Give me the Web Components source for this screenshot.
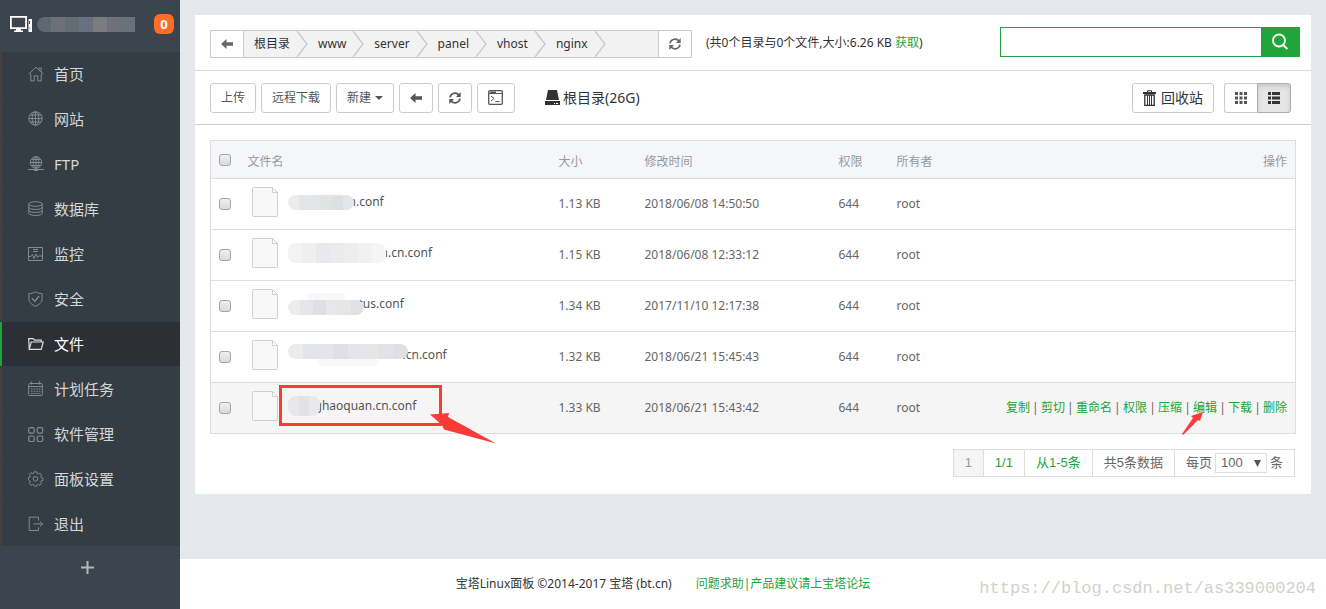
<!DOCTYPE html>
<html lang="zh-CN">
<head>
<meta charset="utf-8">
<title>宝塔Linux面板</title>
<style>
html, body { margin: 0; }
body {
  font: 12px/18px "Noto Sans", "Noto Sans CJK SC", sans-serif;
  color: #333; background: #fff;
  --green: #20a53a; --line: #ddd;
}
</style>
</head>
<body>
<panel-app>
  <side-nav slot="side" count="0">
    <nav-item icon="home">首页</nav-item>
    <nav-item icon="globe">网站</nav-item>
    <nav-item icon="ftp">FTP</nav-item>
    <nav-item icon="db">数据库</nav-item>
    <nav-item icon="monitor">监控</nav-item>
    <nav-item icon="shield">安全</nav-item>
    <nav-item icon="folder" active>文件</nav-item>
    <nav-item icon="calendar">计划任务</nav-item>
    <nav-item icon="apps">软件管理</nav-item>
    <nav-item icon="gear">面板设置</nav-item>
    <nav-item icon="exit">退出</nav-item>
  </side-nav>
  <path-bar path="根目录/www/server/panel/vhost/nginx"></path-bar>
  <tool-bar></tool-bar>
  <file-table></file-table>
  <page-bar></page-bar>
  <page-footer slot="footer"></page-footer>
</panel-app>

<script>
const ICONS = {
  home: [16, 16, '<g fill="none" stroke="currentColor"><path d="M.7 8.3 8 1.2l7.3 7.1M2.8 8v6.9h3.4V9.8h3.6v5.1h3.4V8M11 3.6V2h2.2v3.8"/></g>'],
  globe: [16, 16, '<g fill="none" stroke="currentColor"><circle cx="7.5" cy="7.5" r="6.7"/><ellipse cx="7.5" cy="7.5" rx="3.4" ry="6.7"/><path d="M7.5.8v13.4M.8 7.5h13.4M2 4h11M2 11h11"/></g>'],
  ftp: [16, 16, '<g fill="none" stroke="currentColor"><circle cx="8" cy="6.5" r="5.7"/><ellipse cx="8" cy="6.5" rx="2.8" ry="5.7"/><path d="M8 .8v12M2.3 6.5h11.4M3.4 3.5h9.2M3.4 9.5h9.2M0 13.5h16" /><path d="M6 14h4" stroke-width="2"/></g>'],
  db: [16, 16, '<g fill="none" stroke="currentColor"><ellipse cx="7.5" cy="3" rx="6.7" ry="2.3"/><path d="M.8 3v9.2c0 3 13.4 3 13.4 0V3M.8 6.2c0 3 13.4 3 13.4 0M.8 9.2c0 3 13.4 3 13.4 0"/></g>'],
  monitor: [16, 16, '<g fill="none" stroke="currentColor"><path d="M.5 1.5h14v13H.5zM5 3.5h5M5 5.5h5M1 10.5h2l1.5-2 1.5 4L8 8l1.5 3.5 1-1.5H14"/></g>'],
  shield: [16, 16, '<g fill="none" stroke="currentColor"><path d="M7.5.8C5.5 2 3.5 2.5.9 2.6v5.2c0 3.6 3 6 6.6 7.5 3.6-1.5 6.6-3.9 6.6-7.5V2.6C11.5 2.5 9.5 2 7.5.8z"/><path d="m4 7.3 2.8 2.9L11.2 5" stroke-width="1.3"/></g>'],
  folder: [16, 16, '<g fill="none" stroke="currentColor" stroke-width="1.2"><path d="M1.2 13 .7 2.6h4.5l1.3 1.5h6.8v1.8M1.2 13.3 3.2 6h12l-2 7.3z"/></g>'],
  calendar: [16, 16, '<g fill="none" stroke="currentColor"><rect x=".7" y="2.5" width="13.6" height="12" rx="1"/><path d="M.7 5.5h13.6M3.5.5v3M11.5.5v3"/><path d="M3 8h9.5M3 10.3h9.5M3 12.5h9.5" stroke-dasharray="1.6 1"/></g>'],
  apps: [16, 16, '<g fill="none" stroke="currentColor" stroke-width="1.2"><rect x=".7" y="1.7" width="5.5" height="5.5" rx="1.5"/><rect x="9.2" y="1.7" width="5.5" height="5.5" rx="1.5"/><rect x=".7" y="10" width="5.5" height="5.5" rx="1.5"/><rect x="9.2" y="10" width="5.5" height="5.5" rx="1.5"/></g>'],
  gear: [16, 16, '<g fill="none" stroke="currentColor"><path d="m6.3.8 2.4 0 .4 1.700 1.300.500 1.500-.9 1.700 1.700-.9 1.500.5 1.300 1.700.4v2.400l-1.700.4-.5 1.300.9 1.500-1.700 1.700-1.500-.9-1.300.500-.4 1.300H6.300l-.4-1.300-1.300-.5-1.500.9-1.700-1.700.9-1.500-.5-1.300L.4 9V6.600l1.400-.4.500-1.300-.9-1.500 1.700-1.700 1.500.9 1.300-.5z"/><circle cx="7.500" cy="7.800" r="2.300"/></g>'],
  exit: [16, 16, '<g fill="none" stroke="currentColor"><path d="M10.5 4.5V1.2H1.2v13.3h9.3v-3.3M5.5 7.9h9M12 5.5l2.500 2.400L12 10.300"/></g>'],
  pc: [23, 17, '<g fill="currentColor"><path d="M0 0h17v13H0zm1.8 1.8v9.4h13.4V1.8z" fill-rule="evenodd"/><path d="M6 13h5v1.5h2V16H4v-1.5h2z"/><path d="M18.5 3H22v13h-3.5z"/></g><path d="M19.5 5v3M20 11.5v1" stroke="#3c444d"/>'],
  back: [12, 10, '<path fill="currentColor" d="M0 5 5.5 0v3.2H12v3.6H5.5V10z"/>'],
  refresh: [12, 14, '<g transform="translate(-1 0)"><g fill="none" stroke="currentColor" stroke-width="1.7"><path d="M2 6.3A5 5 0 0 1 11 4.2M12 7.7A5 5 0 0 1 3 9.8"/></g><path fill="currentColor" d="M12.7 1v5H8zM1.3 13V8H6z"/></g>'],
  terminal: [16, 15, '<g fill="none" stroke="currentColor"><rect x=".7" y=".7" width="13.6" height="13.6" rx="1" stroke-width="1.3"/><path d="M1 3.5h13M3 6l3 2.5L3 11M7.5 11.5h4"/></g><path d="M2 1.500h6V3H2z" fill="currentColor"/>'],
  disk: [15, 15, '<g fill="currentColor"><path d="M3 0h9l2 10H1z"/><path d="M0 11h15v4H0z"/></g><path d="M9 13.5h1m1 0h2" stroke="#fff"/>'],
  trash: [14, 16, '<g fill="none" stroke="currentColor"><path d="M0 3h13" stroke-width="2"/><path d="M4.5 2V.7h4V2"/><path d="M1.8 5h9.4v10.3H1.8z" stroke-width="1.3"/><path d="M4.5 5v10M6.5 5v10M8.5 5v10"/></g>'],
  grid: [12, 12, '<path fill="currentColor" d="M0 0h3v3H0zM4.5 0h3v3h-3zM9 0h3v3H9zM0 4.5h3v3H0zM4.5 4.5h3v3h-3zM9 4.5h3v3H9zM0 9h3v3H0zM4.5 9h3v3h-3zM9 9h3v3H9z"/>'],
  list: [12, 12, '<path fill="currentColor" d="M0 0h3v3H0zM4 0h8v3H4zM0 4.5h3v3H0zM4 4.5h8v3H4zM0 9h3v3H0zM4 9h8v3H4z"/>'],
  search: [18, 18, '<g fill="none" stroke="currentColor" stroke-width="1.8"><circle cx="8" cy="7.5" r="6"/><path d="m12 12 4.500 4"/></g>'],
  sep: [12, 26, '<path d="M1 0 11 13 1 26" fill="none" stroke="#c8c8d2" stroke-width="1.3"/>'],
  file: [26, 30, '<path d="M.5 1.5a1 1 0 0 1 1-1H20.5l5 5V28.5a1 1 0 0 1-1 1h-23a1 1 0 0 1-1-1z" fill="#f8f8f8" stroke="#d0d0d0"/><path d="M20.5.5v5h5z" fill="#fff" stroke="#d0d0d0"/>']
};

const define = (name, render) => customElements.define(name, class extends HTMLElement {
  constructor() { super(); this.attachShadow({ mode: 'open' }); }
  connectedCallback() {
    this.shadowRoot.innerHTML = '<style>:host,*{box-sizing:border-box}a{color:inherit;text-decoration:none}</style>' + render(this);
  }
});

define('ui-icon', el => {
  const [w, h, body] = ICONS[el.getAttribute('name')];
  return `<style>:host{display:block;flex:none}svg{display:block}</style>
  <svg width="${w}" height="${h}" viewBox="0 0 ${w} ${h}" aria-hidden="true">${body}</svg>`;
});

/* Pixelated strip that hides the private part of a name; "faint" adds a paler smear above or below it */
define('mask-strip', el => {
  const w = +el.getAttribute('width'), h = +el.getAttribute('height') || 15;
  const faint = el.getAttribute('faint');
  return `<style>:host{display:flex;flex-direction:${faint === 'above' ? 'column-reverse' : 'column'};flex:none;position:relative;z-index:1;width:${w}px}
  .tones{display:flex;height:${h}px;border-radius:${el.getAttribute('shape') || '8px'};overflow:hidden}i{flex:1}
  .smear{height:7px;margin:0 25%;border-radius:3px;background:#f8f8f9}</style>
  <div class="tones">${el.getAttribute('tones').split(' ').map(t => `<i style="background:#${t}"></i>`).join('')}</div>
  ${faint === 'above' || faint === 'below' ? '<div class="smear"></div>' : ''}`;
});

define('panel-app', () => `<style>
  :host{display:flex;min-height:100vh}
  .page{flex:1;min-width:0;display:flex;flex-direction:column;background:#e5e9ee}
  main{margin:15px 15px 24px;background:#fff}
  slot[name=footer]{display:block;margin-top:auto}
  </style><slot name="side"></slot>
  <div class="page"><main><slot></slot></main><slot name="footer"></slot></div>`);

define('side-nav', el => `<style>
  :host{display:block;flex:none;width:180px;background:#3c444d;color:#fff}
  header{display:flex;align-items:center;gap:4px;height:52px;padding:0 6px 4px 10px}
  header b{margin-left:auto;width:20px;height:20px;border-radius:6px;background:#ff6d27;font-size:13px;line-height:20px;text-align:center}
  nav{display:flex;flex-direction:column;gap:1px;background:#353d44}
  button{display:flex;align-items:center;justify-content:center;width:175px;height:42px;padding:0;border:0;background:none}
  </style>
  <header><ui-icon name="pc"></ui-icon>
    <mask-strip width="98" shape="8px 0 0 8px" tones="5d6871 6f6f78 636b73 68717f 7b7b80 6f7079 68727b"></mask-strip>
    <b>${el.getAttribute('count')}</b></header>
  <nav><slot></slot></nav>
  <button aria-label="添加"><svg width="13" height="13"><path d="M6.5 0v13M0 6.5h13" stroke="#b4b7ba" stroke-width="2"/></svg></button>`);

define('nav-item', el => {
  const on = el.hasAttribute('active');
  return `<style>
  :host{display:block}
  a{display:flex;align-items:center;gap:10px;height:44px;padding-left:26px;border-left:2px solid ${on ? 'var(--green)' : '#463f3e'};
    font-size:15px;line-height:20px;color:${on ? '#fff' : '#d4d6d8'};background:${on ? '#2c3036' : 'transparent'}}
  ui-icon{color:${on ? '#dcdcdc' : '#858a8e'}}
  </style><a href="#"><ui-icon name="${el.getAttribute('icon')}"></ui-icon><slot></slot></a>`;
});

define('path-bar', el => `<style>
  :host{display:flex;align-items:center;height:56px;padding:0 11px 0 15px;border-bottom:1px solid var(--line)}
  .crumbs{display:flex;width:482px;height:28px;margin-top:2px;border:1px solid #ccc;background:#f2f2f2}
  button{display:flex;align-items:center;justify-content:center;padding:0;border:0;color:#666;background:#fff}
  .crumbs button{width:33px}
  .crumbs button:first-child{border-right:1px solid #ccc}
  .crumbs button:last-child{border-left:1px solid #ccc;margin-left:auto}
  ol{display:flex;margin:0;padding:0;list-style:none}
  li{display:flex;align-items:center;padding-left:10px;gap:6px}
  p{margin:0 auto 0 14px;white-space:nowrap}
  p a{color:var(--green)}
  form{display:flex;width:300px;height:30px;margin-bottom:2px;border:1px solid var(--green)}
  input{flex:1;min-width:0;border:0;padding:0 8px;font:inherit;outline:0}
  form button{width:38px;background:var(--green);color:#fff}
  </style>
  <nav class="crumbs"><button aria-label="返回"><ui-icon name="back"></ui-icon></button>
  <ol>${el.getAttribute('path').split('/').map(p => `<li><a href="#">${p}</a><ui-icon name="sep"></ui-icon></li>`).join('')}</ol>
  <button aria-label="刷新"><ui-icon name="refresh"></ui-icon></button></nav>
  <p>(共0个目录与0个文件,大小:6.26 KB <a href="#">获取</a>)</p>
  <form><input type="text" aria-label="搜索文件"><button type="button" aria-label="搜索"><ui-icon name="search"></ui-icon></button></form>`);

define('tool-bar', () => `<style>
  :host{display:flex;align-items:center;gap:5px;height:54px;padding:0 20px 0 15px;border-bottom:1px solid #ccc}
  button{display:flex;align-items:center;justify-content:center;gap:4px;height:30px;padding:0 10px;border:1px solid #ccc;border-radius:3px;
    background:#fff;color:#555;font:inherit;white-space:nowrap}
  .caret{border:4px solid transparent;border-top-color:#555;border-bottom:0}
  a,.bin{font-size:14px;line-height:20px;color:#333}
  a{display:flex;align-items:center;gap:3px;margin:0 auto 0 25px}
  .view{display:flex;margin-left:5px}
  .view button:first-child{border-radius:3px 0 0 3px;border-right:0}
  .view button:last-child{border-radius:0 3px 3px 0;border-color:#adadad;background:#e6e6e6;color:#333;box-shadow:inset 0 3px 5px rgba(0,0,0,.125)}
  </style>
  <button>上传</button><button>远程下载</button><button>新建<span class="caret"></span></button>
  <button aria-label="返回"><ui-icon name="back"></ui-icon></button>
  <button aria-label="刷新"><ui-icon name="refresh"></ui-icon></button>
  <button aria-label="终端"><ui-icon name="terminal"></ui-icon></button>
  <a href="#"><ui-icon name="disk"></ui-icon>根目录(26G)</a>
  <button class="bin"><ui-icon name="trash"></ui-icon>回收站</button>
  <div class="view"><button aria-label="图标视图"><ui-icon name="grid"></ui-icon></button><button aria-label="列表视图"><ui-icon name="list"></ui-icon></button></div>`);

const FILES = [
  { w: 66, tones: 'ececed e4e5e8 e3e4e6 e1e3e1 dedfe0 e5e6e8', name: 'n.conf', size: '1.13 KB', time: '2018/06/08 14:50:50' },
  { w: 98, h: 20, tones: 'f3f3f3 efeff0 e9e9ec ebebed ededee f1f1f2 f4f5f5', name: 'n.cn.conf', size: '1.15 KB', time: '2018/06/08 12:33:12' },
  { w: 76, faint: 'above', tones: 'ededee e6e6ea dfe0e2 e7e7e9 e6e6e7 e0e1e2', name: 'tus.conf', size: '1.34 KB', time: '2017/11/10 12:17:38' },
  { w: 120, faint: 'below', tones: 'ececed e3e4e5 e5e5e7 dfe0e2 e5e5e9 e6e6e7 e2e3e7 e0e0e2', name: '.cn.conf', size: '1.32 KB', time: '2018/06/21 15:45:43' },
  { w: 32, h: 20, tones: 'e8e8ea e3e3e5 e9e9eb', name: 'ghaoquan.cn.conf', size: '1.33 KB', time: '2018/06/21 15:43:42', open: true }
];
const ACTIONS = ['复制', '剪切', '重命名', '权限', '压缩', '编辑', '下载', '删除'];

define('file-table', () => `<style>
  :host{display:block;padding:15px 15px 0}
  table{width:100%;table-layout:fixed;border-collapse:collapse;border:1px solid var(--line)}
  th,td{padding:0 8px;text-align:left;white-space:nowrap;border-bottom:1px solid var(--line)}
  th{height:38px;padding-top:4px;font-weight:400;color:#999;background:#f4f6fa}
  td{height:51px;color:#666}
  th:last-child,td:last-child{text-align:right}
  th:first-child{padding-top:0}
  .c0{width:29px}.c1{width:311px}.c2{width:86px}.c3{width:194px}.c4{width:58px}.c5{width:100px}
  input{appearance:none;display:block;width:12px;height:12px;margin:0;border:1px solid #a5a5a5;border-radius:3px;background:linear-gradient(#f0f0f0,#d9d9d9)}
  .open{background:#f5f5f5}
  .name{position:relative;padding:0 12px 4px}
  .file{display:flex;align-items:center;color:#555}
  mask-strip{margin:0 -5px 0 10px}
  td:last-child a{color:var(--green);position:relative}
  td i{display:inline-block;width:11px;text-align:center;font-style:normal}
  .mark{position:absolute;pointer-events:none}
  .box{left:39px;top:2px;width:163px;height:41px;border:3px solid #fc3a38}
  .long{left:190px;top:30px}
  .short{left:-12px;top:12px}
  </style>
  <table><thead><tr><th class="c0"><input type="checkbox" aria-label="全选"></th><th class="c1">文件名</th><th class="c2">大小</th>
  <th class="c3">修改时间</th><th class="c4">权限</th><th class="c5">所有者</th><th>操作</th></tr></thead>
  <tbody>${FILES.map(f => `<tr class="${f.open ? 'open' : ''}"><td><input type="checkbox" aria-label="选择 ${f.name}"></td>
    <td class="name"><a class="file" href="#"><ui-icon name="file"></ui-icon><mask-strip width="${f.w}" height="${f.h || 15}" faint="${f.faint || 'none'}" tones="${f.tones}"></mask-strip><span>${f.name}</span></a>
    ${f.open ? '<span class="mark box"></span><svg class="mark long" width="68" height="32"><path d="M0 1.5 19 0l-1 4L66 30.5 14 16.5 12 12z" fill="#fc3a38"/></svg>' : ''}</td>
    <td>${f.size}</td><td>${f.time}</td><td>644</td><td>root</td>
    <td>${f.open ? ACTIONS.map(a => `<a href="#">${a}${a === '编辑' ? '<svg class="mark short" width="24" height="26"><path d="M22 1 19 10l-2-1L2 24l-1-1L12 7l-2-2z" fill="#fc3a38"/></svg>' : ''}</a>`).join('<i>|</i>') : ''}</td></tr>`).join('')}</tbody></table>`);

define('page-bar', () => `<style>
  :host{display:flex;justify-content:flex-end;padding:15px 16px 17px;font:13px/18px "Liberation Sans","Noto Sans CJK SC",sans-serif;color:#666}
  div{display:flex;height:28px;border:1px solid var(--line)}
  div>*{display:flex;align-items:center;padding:0 11px;white-space:nowrap}
  div>*+*{border-left:1px solid var(--line)}
  a{color:var(--green)}
  .now{background:#f5f5f5;color:#999}
  label{gap:3px}
  select{appearance:none;width:52px;height:20px;padding:0 5px;border:1px solid var(--line);border-radius:0;font:inherit;color:inherit;background:#fff}
  .pick{display:grid;align-items:center}
  .pick>*{grid-area:1/1}
  .pick svg{justify-self:end;margin-right:6px;pointer-events:none}
  </style><div><span class="now">1</span><a href="#">1/1</a><a href="#">从1-5条</a><span>共5条数据</span>
  <label>每页<span class="pick"><select><option>100</option></select><svg width="7" height="7"><path d="M0 0h7L3.5 7z" fill="#555"/></svg></span>条</label></div>`);

define('page-footer', () => `<style>
  :host{display:block;position:relative;background:#fff}
  footer{display:flex;align-items:center;justify-content:center;gap:24px;height:50px;padding-right:180px}
  a{color:var(--green)}
  .site{position:absolute;right:10px;top:20px;font:17px/20px "Liberation Mono",monospace;color:#d2d2cc}
  </style><footer><span>宝塔Linux面板 ©2014-2017 宝塔 (bt.cn)</span><a href="#">问题求助|产品建议请上宝塔论坛</a></footer>
  <span class="site">https://blog.csdn.net/as339000204</span>`);
</script>
</body>
</html>
